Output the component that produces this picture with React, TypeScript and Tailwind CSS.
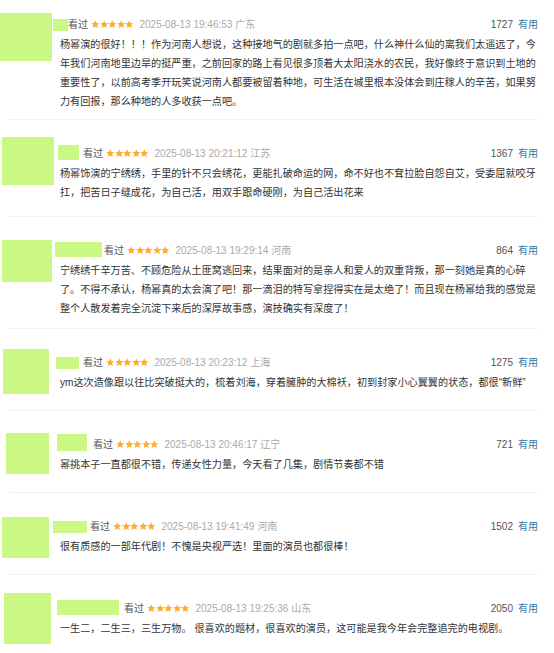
const reviews = [
  {
    time: '2025-08-13 19:46:53',
    loc: '广东',
    votes: 1727,
    text: '杨幂演的很好！！！作为河南人想说，这种接地气的剧就多拍一点吧，什么神什么仙的离我们太遥远了，今年我们河南地里边旱的挺严重，之前回家的路上看见很多顶着大太阳浇水的农民，我好像终于意识到土地的重要性了，以前高考季开玩笑说河南人都要被留着种地，可生活在城里根本没体会到庄稼人的辛苦，如果努力有回报，那么种地的人多收获一点吧。',
    box: 'h-[119px]',
    pad: 'pt-[13px]',
    avatar: 'ml-[0px] mt-[13px] w-[52px] h-[48px]',
    name: 'ml-[-7px] w-[15px] h-[12px]',
    seen: 'ml-[0px]',
  },
  {
    time: '2025-08-13 20:21:12',
    loc: '江苏',
    votes: 1367,
    text: '杨幂饰演的宁绣绣，手里的针不只会绣花，更能扎破命运的网，命不好也不耷拉脸自怨自艾，受委屈就咬牙扛，把苦日子缝成花，为自己活，用双手跟命硬刚，为自己活出花来',
    box: 'h-[96px]',
    pad: 'pt-[22px]',
    avatar: 'ml-[2px] mt-[17px] w-[52px] h-[48px]',
    name: 'ml-[-2px] w-[21px] h-[15px]',
    seen: 'ml-[4px]',
  },
  {
    time: '2025-08-13 19:29:14',
    loc: '河南',
    votes: 864,
    text: '宁绣绣千辛万苦、不顾危险从土匪窝逃回来，结果面对的是亲人和爱人的双重背叛，那一刻她是真的心碎了。不得不承认，杨幂真的太会演了吧！那一滴泪的特写拿捏得实在是太绝了！而且现在杨幂给我的感觉是整个人散发着完全沉淀下来后的深厚故事感，演技确实有深度了！',
    box: 'h-[111px]',
    pad: 'pt-[22px]',
    avatar: 'ml-[2px] mt-[23px] w-[50px] h-[42px]',
    name: 'ml-[-5px] w-[47px] h-[15px]',
    seen: 'ml-[2px]',
  },
  {
    time: '2025-08-13 20:23:12',
    loc: '上海',
    votes: 1275,
    text: 'ym这次造像跟以往比突破挺大的，梳着刘海，穿着臃肿的大棉袄，初到封家小心翼翼的状态，都很“新鲜”',
    box: 'h-[81px]',
    pad: 'pt-[22px]',
    avatar: 'ml-[3px] mt-[20px] w-[46px] h-[45px]',
    name: 'ml-[-4px] w-[23px] h-[12px]',
    seen: 'ml-[4px]',
  },
  {
    time: '2025-08-13 20:46:17',
    loc: '辽宁',
    votes: 721,
    text: '幂挑本子一直都很不错，传递女性力量，今天看了几集，剧情节奏都不错',
    box: 'h-[81px]',
    pad: 'pt-[22px]',
    avatar: 'ml-[6px] mt-[22px] w-[43px] h-[41px]',
    name: 'ml-[-3px] w-[30px] h-[17px]',
    seen: 'ml-[6px]',
  },
  {
    time: '2025-08-13 19:41:49',
    loc: '河南',
    votes: 1502,
    text: '很有质感的一部年代剧！不愧是央视严选！里面的演员也都很棒！',
    box: 'h-[81px]',
    pad: 'pt-[22px]',
    avatar: 'ml-[2px] mt-[24px] w-[47px] h-[41px]',
    name: 'ml-[-7px] w-[34px] h-[12px]',
    seen: 'ml-[3px]',
  },
  {
    time: '2025-08-13 19:25:36',
    loc: '山东',
    votes: 2050,
    text: '一生二，二生三，三生万物。 很喜欢的题材，很喜欢的演员，这可能是我今年会完整追完的电视剧。',
    box: 'h-[90px]',
    pad: 'pt-[22px]',
    avatar: 'ml-[4px] mt-[18px] w-[47px] h-[51px]',
    name: 'ml-[-3px] w-[62px] h-[15px]',
    seen: 'ml-[5px]',
  },
];

function Stars() {
  return (
    <span className="ml-[3px] flex">
      {[0, 1, 2, 3, 4].map(i => (
        <svg key={i} viewBox="1 1.5 22 21" className="h-[8.5px] w-[8.5px]">
          <path
            d="M12 1.5l3.1 7 7.4.6-5.6 4.9 1.7 7.4L12 17.5l-6.6 3.9 1.7-7.4-5.6-4.9 7.4-.6z"
            fill="#ffac2d"
          />
        </svg>
      ))}
    </span>
  );
}

export default function App() {
  return (
    <div
      className="w-[554px] bg-white"
      style={{ fontFamily: '"Liberation Sans", "Noto Sans CJK SC", sans-serif' }}
    >
      {reviews.map((r, idx) => (
        <div key={idx}>
          {idx > 0 && <div className="ml-[10px] mr-[16px] h-px bg-[#f0f0f0]" />}
          <div className={`flex overflow-hidden ${r.box}`}>
            <div className="w-[60px] shrink-0">
              <div className={`bg-[#cbf784] ${r.avatar}`} />
            </div>
            <div className={`min-w-0 flex-1 pr-[16px] ${r.pad}`}>
              <div className="flex h-[18px] items-end justify-between">
                <div className="flex items-end">
                  <div className={`bg-[#cbf784] ${r.name}`} />
                  <div className="flex h-[13px] items-center leading-[13px]">
                    <span className={`text-[10px] text-[#555] ${r.seen}`}>看过</span>
                    <Stars />
                    <span className="ml-[6px] text-[10px] text-[#aaa]">{r.time}</span>
                    <span className="ml-[3px] text-[10px] text-[#aaa]">{r.loc}</span>
                  </div>
                </div>
                <div className="flex h-[13px] items-center leading-[13px]">
                  <span className="text-[10px] text-[#555]">{r.votes}</span>
                  <span className="ml-[5px] text-[10px] text-[#37a]">有用</span>
                </div>
              </div>
              <p className="mt-[4px] text-[10.15px] leading-[19px] text-[#333]">{r.text}</p>
            </div>
          </div>
        </div>
      ))}
    </div>
  );
}
